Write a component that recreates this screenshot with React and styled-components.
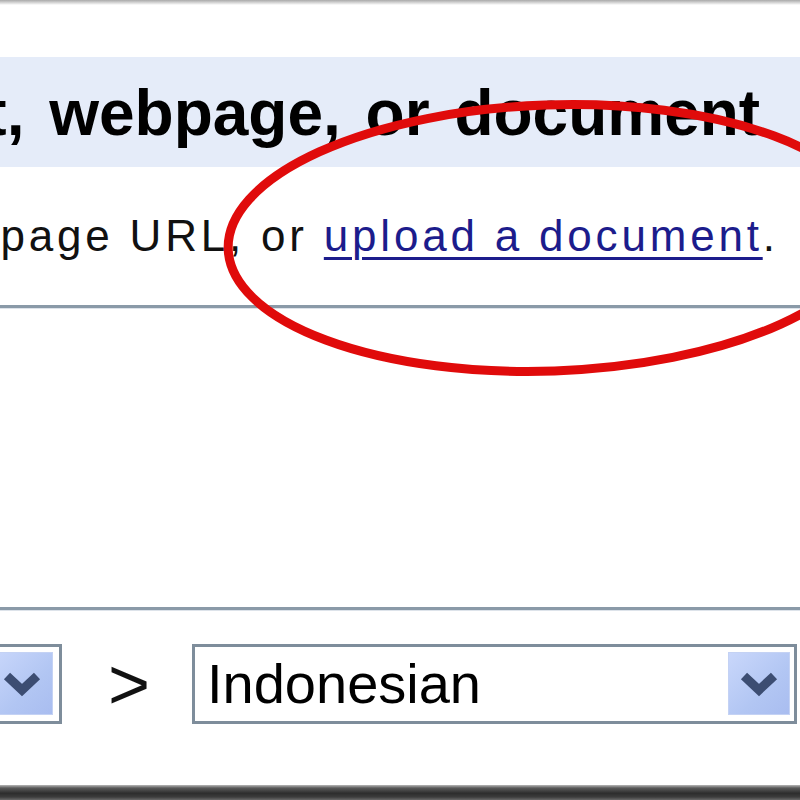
import React from 'react';
import styled, { createGlobalStyle } from 'styled-components';

const GlobalStyle = createGlobalStyle`
  html, body {
    margin: 0;
    padding: 0;
    background: #fff;
  }
  body {
    font-family: 'Liberation Sans', Arial, sans-serif;
  }
`

const Frame = styled.div`
  position: relative;
  width: 800px;
  height: 800px;
  overflow: hidden;
  display: flex;
  flex-direction: column;
  background: #fff;
`

const TopEdge = styled.div`
  height: 5px;
  flex: none;
  background: linear-gradient(to bottom, #a9a9a9, #e4e4e4 70%, #fff);
`

const Panel = styled.div`
  flex: 1;
  display: flex;
  flex-direction: column;
  padding-top: 52px;
`

const Header = styled.div`
  height: 110px;
  background: #e5ecf9;
  overflow: hidden;
  white-space: nowrap;
`

// the panel is cropped on the left, so the start of each line sits off the edge
const Heading = styled.h1`
  margin: 0 0 0 -413px;
  padding-top: 3px;
  font: bold 64px/107px 'Liberation Sans', Arial, sans-serif;
  word-spacing: 7px;
  color: #000;
`

const Intro = styled.p`
  margin: 0 0 0 -441px;
  height: 138px;
  white-space: nowrap;
  font: 44px/138px 'Liberation Sans', Arial, sans-serif;
  letter-spacing: 3.8px;
  color: #111;
`

const Link = styled.a`
  color: #1c1c8c;
  text-decoration: underline;
  text-decoration-thickness: 3px;
  text-underline-offset: 6px;
`

const Divider = styled.div`
  height: 3px;
  flex: none;
  background: #8a9aa8;
  border-bottom: 1px solid #dde3ea;
`

const InputArea = styled.div`
  height: 298px;
  flex: none;
`

const LangRow = styled.div`
  flex: 1;
  display: flex;
  align-items: flex-start;
  padding-top: 33px;
`

const Select = styled.div`
  box-sizing: border-box;
  height: 80px;
  min-width: 0;
  width: ${props => props.$width ? props.$width + 'px' : 'auto'};
  flex: ${props => props.$grow ? 1 : 'none'};
  margin-left: ${props => props.$offset || 0}px;
  margin-right: ${props => props.$right || 0}px;
  border: 3px solid #7e8d9b;
  padding: 5px ${props => props.$inset || 4}px 6px 12px;
  display: flex;
  align-items: center;
  background: #fff;
`

const SelectText = styled.span`
  flex: 1;
  min-width: 0;
  overflow: hidden;
  font: 56px/1 'Liberation Sans', Arial, sans-serif;
  color: #000;
  white-space: nowrap;
`

const DropButton = styled.div`
  width: 60px;
  align-self: stretch;
  flex: none;
  display: flex;
  align-items: center;
  justify-content: center;
  background: linear-gradient(135deg, #c9d7fb, #b2c6f3 60%, #a9bdf0);
  border: 1px solid #c4d2f4;
`

const Arrow = styled.span`
  flex: none;
  width: 130px;
  padding-left: 46px;
  box-sizing: border-box;
  font: 72px/80px 'Liberation Sans', Arial, sans-serif;
  color: #111;
`

const BottomEdge = styled.div`
  height: 15px;
  flex: none;
  background: linear-gradient(to bottom, #b8b8b8 0, #5a5a5a 20%, #2d2d2d 55%, #3c3c3c 80%, #6a6a6a 100%);
`

const Overlay = styled.svg`
  position: absolute;
  left: 0;
  top: 0;
  pointer-events: none;
`

function Chevron() {
  return (
    <svg width="40" height="28" viewBox="0 0 40 28">
      <polyline points="5,6 20,20 35,6" fill="none" stroke="#3c4d72" strokeWidth="9" strokeLinejoin="miter" />
    </svg>
  )
}

class App extends React.Component {
  render() {
    return (
      <Frame>
        <GlobalStyle />
        <TopEdge />
        <Panel>
          <Header>
            <Heading>Translate text, webpage, or document</Heading>
          </Header>
          <Intro>
            Enter text or a webpage URL, or <Link href="#">upload a document</Link>.
          </Intro>
          <Divider />
          <InputArea />
          <Divider />
          <LangRow>
            <Select $width={320} $offset={-258} $inset={6}>
              <SelectText>English</SelectText>
              <DropButton><Chevron /></DropButton>
            </Select>
            <Arrow>&gt;</Arrow>
            <Select $grow $right={3}>
              <SelectText>Indonesian</SelectText>
              <DropButton><Chevron /></DropButton>
            </Select>
          </LangRow>
        </Panel>
        <BottomEdge />
        <Overlay width="800" height="800" viewBox="0 0 800 800">
          <ellipse cx="550" cy="238" rx="322" ry="133" fill="none" stroke="#e00b0b" strokeWidth="9" transform="rotate(-2 550 238)" />
        </Overlay>
      </Frame>
    );
  }
}

export default App;
